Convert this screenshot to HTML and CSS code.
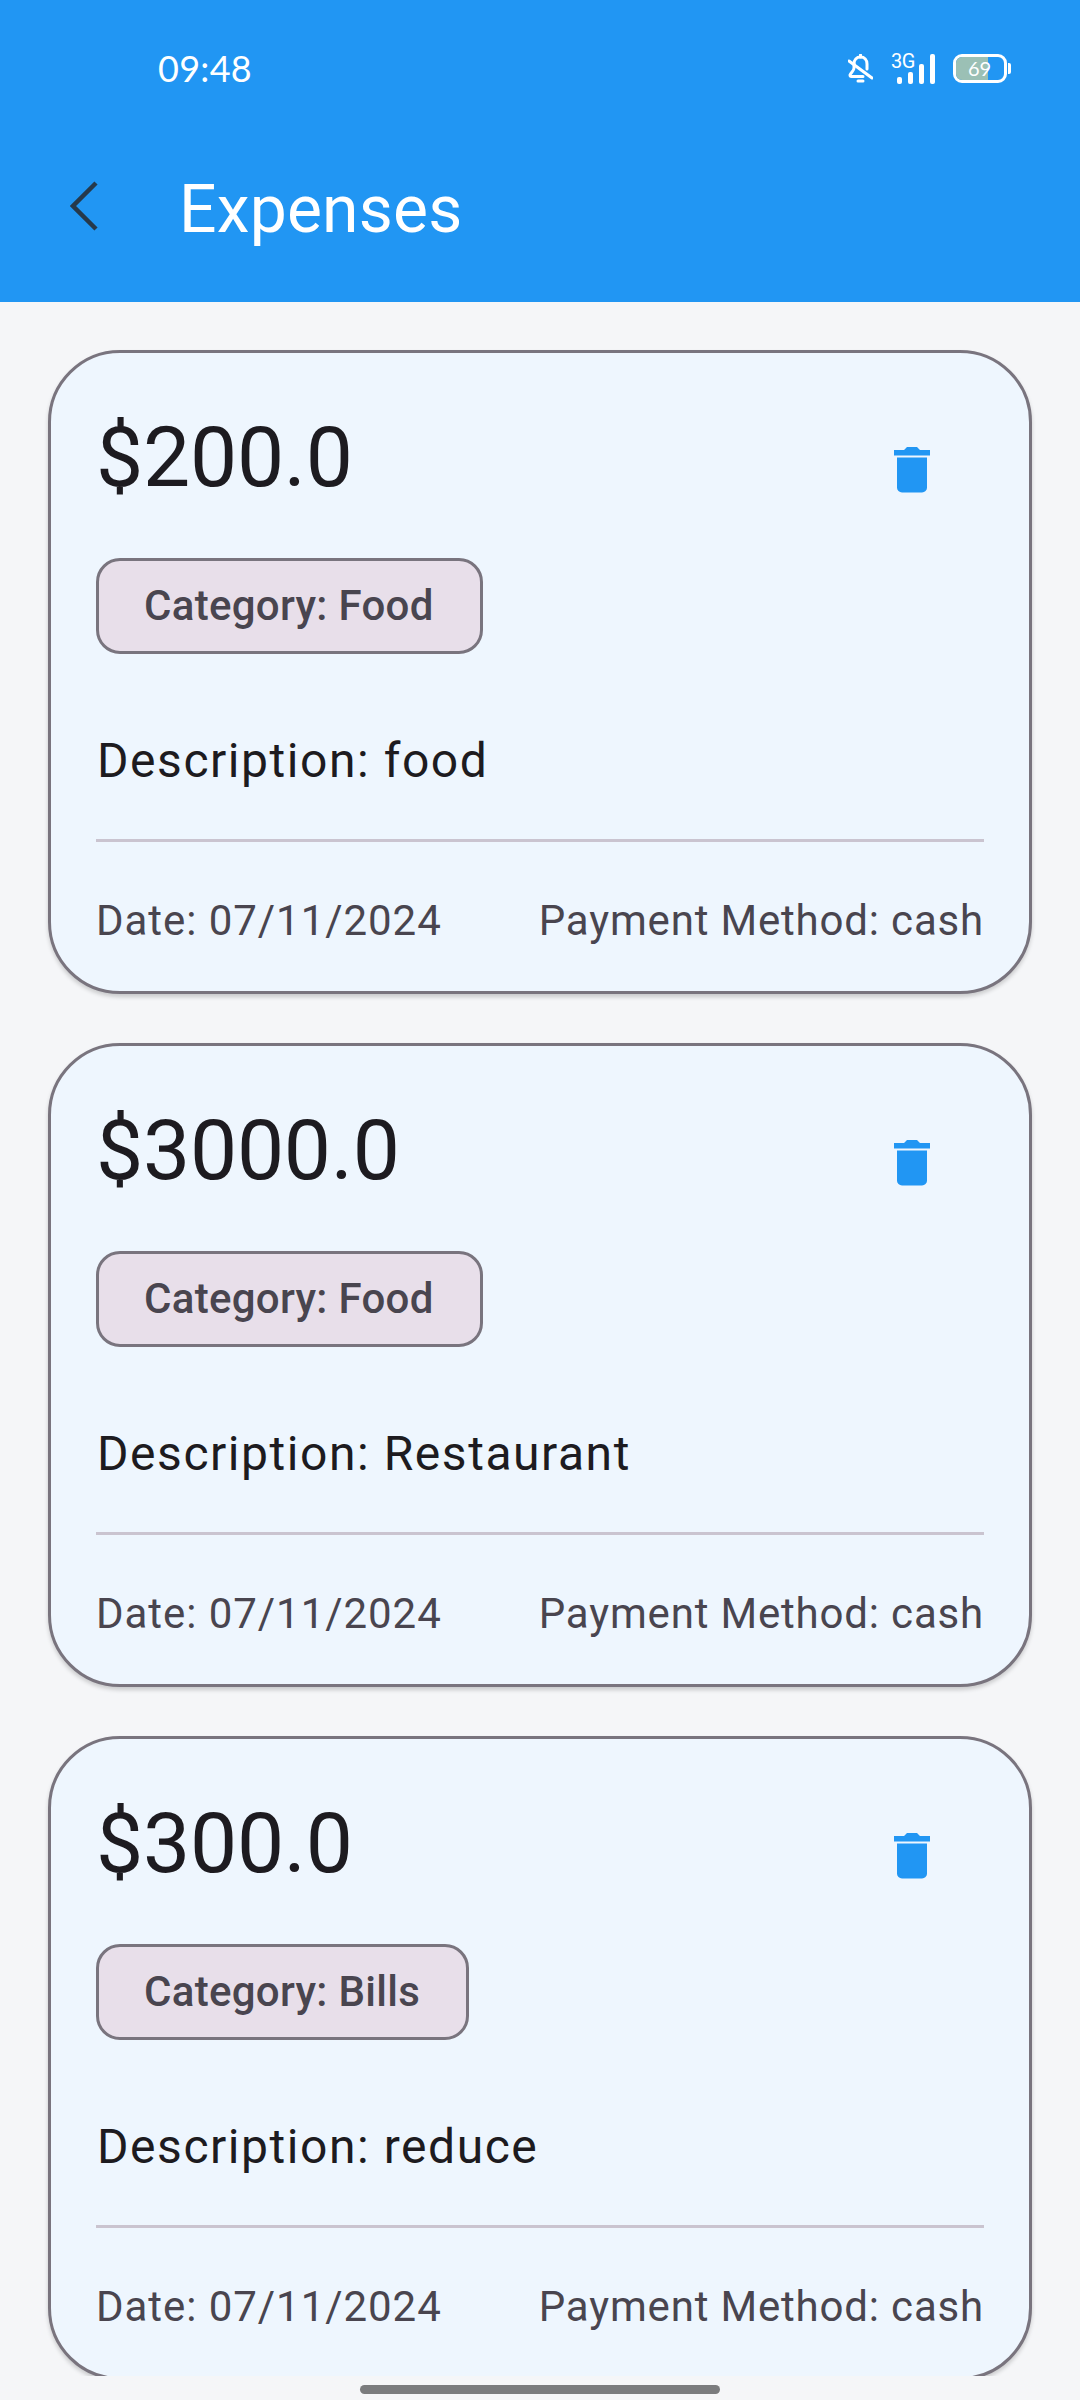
FILE: index.html
```html
<!DOCTYPE html>
<html lang="en">
<head>
<meta charset="utf-8">
<title>Expenses</title>
<link rel="stylesheet" href="styles.css">
</head>
<body>
<header class="appbar">
  <div class="status">
    <span class="time">09:48</span>
    <div class="status-icons">
      <svg class="bell" width="25" height="30" viewBox="0 0 25 30" fill="none" stroke="#fff" stroke-width="3" stroke-linecap="round" stroke-linejoin="round"><path d="M6 10c0-4 2.500-7 6.500-7s6.500 3 6.500 7v5"/><path d="M6 10v4c0 3-3 4.500-4 7 0 1 .5 1.500 1.500 1.500H15"/><path d="M1 7l23 17"/><path d="M10 27h5"/><path d="M12.500 1v2"/></svg>
      <div class="net">
        <span class="net-label">3G</span>
        <div class="bars"><i class="bar b1"></i><i class="bar b2"></i><i class="bar b3"></i><i class="bar b4"></i></div>
      </div>
      <div class="battery">
        <div class="battery-body"><div class="battery-fill" style="width:66%"></div><span class="battery-num">69</span></div>
        <i class="battery-nub"></i>
      </div>
    </div>
  </div>
  <div class="toolbar">
    <svg class="back" width="30" height="52" viewBox="0 0 30 52" fill="none" stroke="#26394b" stroke-width="4.500"><path d="M26 3L3 26l23 23"/></svg>
    <h1 class="title">Expenses</h1>
  </div>
</header>
<main class="list">
  <article class="card">
    <div class="top"><div class="amount">$200.0</div><button class="del"><svg width="36" height="46" viewBox="0 0 36 46" fill="#2196f3"><path d="M0 3h10l3-3h10l3 3h10v5.500H0z"/><path d="M3 10.500h30v30a5 5 0 0 1-5 5H8a5 5 0 0 1-5-5z"/></svg></button></div>
    <div class="chip">Category: Food</div>
    <p class="desc">Description: food</p>
    <hr class="rule">
    <div class="meta"><span class="date">Date: 07/11/2024</span><span class="pay">Payment Method: cash</span></div>
  </article>
  <article class="card">
    <div class="top"><div class="amount">$3000.0</div><button class="del"><svg width="36" height="46" viewBox="0 0 36 46" fill="#2196f3"><path d="M0 3h10l3-3h10l3 3h10v5.500H0z"/><path d="M3 10.500h30v30a5 5 0 0 1-5 5H8a5 5 0 0 1-5-5z"/></svg></button></div>
    <div class="chip">Category: Food</div>
    <p class="desc">Description: Restaurant</p>
    <hr class="rule">
    <div class="meta"><span class="date">Date: 07/11/2024</span><span class="pay">Payment Method: cash</span></div>
  </article>
  <article class="card">
    <div class="top"><div class="amount">$300.0</div><button class="del"><svg width="36" height="46" viewBox="0 0 36 46" fill="#2196f3"><path d="M0 3h10l3-3h10l3 3h10v5.500H0z"/><path d="M3 10.500h30v30a5 5 0 0 1-5 5H8a5 5 0 0 1-5-5z"/></svg></button></div>
    <div class="chip">Category: Bills</div>
    <p class="desc">Description: reduce</p>
    <hr class="rule">
    <div class="meta"><span class="date">Date: 07/11/2024</span><span class="pay">Payment Method: cash</span></div>
  </article>
</main>
<footer class="nav"><i class="home"></i></footer>
</body>
</html>
```
FILE: styles.css
```css
* { box-sizing: border-box; }
html, body { margin: 0; height: 2400px; }
body {
  display: flex;
  flex-direction: column;
  overflow: hidden;
  background: #f5f6f8;
  font-family: Roboto, "Liberation Sans", sans-serif;
}
.appbar { height: 302px; flex: none; background: #2196f3; color: #fff; }
.status {
  height: 136px;
  padding: 50px 69px 0 158px;
  display: flex;
  justify-content: space-between;
  align-items: flex-start;
}
.time { font-family: Lato, Roboto, sans-serif; font-size: 36px; line-height: 36px; letter-spacing: .3px; }
.status-icons { display: flex; align-items: flex-start; padding-top: 4px; }
.bell { display: block; }
.net { position: relative; width: 44px; height: 30px; margin-left: 18px; }
.net-label { position: absolute; left: 0; top: -1px; font-size: 20px; line-height: 17px; letter-spacing: -.5px; }
.bars { height: 30px; display: flex; align-items: flex-end; gap: 6px; padding-left: 6px; }
.bar { display: block; width: 5px; background: #fff; border-radius: 2px; }
.b1 { height: 7px; } .b2 { height: 12px; } .b3 { height: 20px; } .b4 { height: 30px; }
.battery { display: flex; align-items: center; margin-left: 18px; }
.battery-body { position: relative; width: 54px; height: 29px; border: 3px solid #fff; border-radius: 9px; overflow: hidden; }
.battery-fill { height: 100%; background: #9bc0b5; }
.battery-num { position: absolute; left: 12px; top: 0; font-family: Lato, Roboto, sans-serif; font-size: 20px; line-height: 23px; }
.battery-nub { display: block; width: 3px; height: 11px; margin-left: 1px; background: #fff; border-radius: 0 2px 2px 0; }
.toolbar { height: 144px; display: flex; align-items: center; padding: 0 0 0 70px; margin-top: -2px; }
.back { display: block; flex: none; }
.title { margin: 0 0 0 79px; padding-top: 8px; font-size: 66px; line-height: 88px; font-weight: 400; letter-spacing: .2px; }
.list {
  height: 2074px;
  flex: none;
  overflow: hidden;
  padding: 48px 48px 0;
  display: flex;
  flex-direction: column;
  gap: 49px;
}
.card {
  flex: none;
  height: 644px;
  padding: 45px 45px 40px;
  background: #eef6fe;
  border: 3px solid #79747e;
  border-radius: 72px;
  box-shadow: 0 3px 4px rgba(0, 0, 0, .18);
}
.top { display: flex; justify-content: space-between; align-items: flex-start; height: 144px; }
.amount { font-size: 84px; line-height: 120px; letter-spacing: -.25px; color: #1d1b20; }
.del { width: 144px; height: 144px; padding: 0; border: 0; background: none; display: flex; align-items: center; justify-content: center; }
.chip {
  display: table;
  height: 96px;
  margin-top: 16px;
  padding: 0 46px 0 45px;
  background: #e8dfea;
  border: 3px solid #79747e;
  border-radius: 24px;
  color: #49454f;
  font-size: 42px;
  font-weight: 500;
  line-height: 90px;
  letter-spacing: .3px;
}
.desc { margin: 71px 0 0; padding-left: 1px; font-size: 48px; line-height: 72px; letter-spacing: 1.55px; color: #1d1b20; }
.rule { margin: 42px 0 0; height: 3px; border: 0; background: #cac4d0; }
.meta {
  margin-top: 49px;
  display: flex;
  justify-content: space-between;
  font-size: 42px;
  line-height: 60px;
  color: #49454f;
}
.date { letter-spacing: .95px; }
.pay { letter-spacing: .82px; }
.nav { flex: 1; position: relative; }
.home { position: absolute; left: 360px; top: 9px; width: 360px; height: 9px; border-radius: 5px; background: #7b7c7e; }
```
